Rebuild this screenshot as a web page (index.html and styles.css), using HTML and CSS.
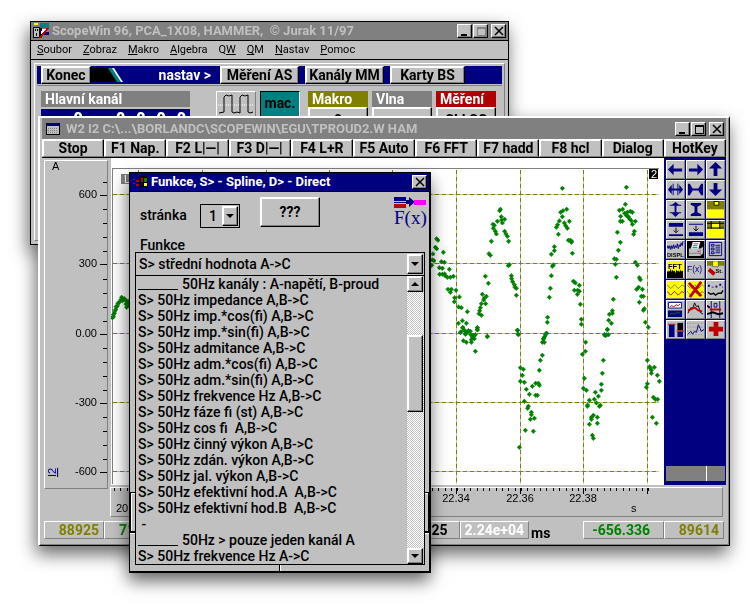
FILE: index.html
```html
<!DOCTYPE html>
<html lang="cs">
<head>
<meta charset="utf-8">
<title>ScopeWin 96</title>
<link rel="stylesheet" href="styles.css">
</head>
<body>
<main class="desktop">
<div class="windows">
<section class="window main-window">
  <header class="titlebar">
    <svg class="app-icon" width="16" height="16" viewBox="0 0 16 16" shape-rendering="crispEdges"><path fill="#008080" d="M7 0h9v5H7z"/><path fill="#ff0" d="M1 0h4v2H1z"/><path fill="#000080" d="M9 9h7v3H9z"/><path fill="#c0c0c0" stroke="#000" d="M.5 4.500h6v10h-6z"/><path d="M2 6h1v2H2zM4 6h1v2H4zM3 10h1v3H3zM7 5h2v2h2v3H9v3H7z"/><path fill="#fff" d="M9 6h4l-3 5H8z"/><path d="M7 15l8-10" stroke="#c00000" stroke-width="2"/></svg>
    <h1>ScopeWin 96, PCA_1X08, HAMMER, &nbsp;© Jurak 11/97</h1>
    <div class="controls">
      <button aria-label="Minimalizovat"><svg width="12" height="12" shape-rendering="crispEdges"><path d="M2 9h6v2H2z"/></svg></button>
      <button aria-label="Maximalizovat"><svg width="12" height="12" shape-rendering="crispEdges"><path d="M2.500 2.500h8v8h-8z" fill="none" stroke="#808080"/><path d="M2 2h9v2H2z" fill="#808080"/></svg></button>
      <button aria-label="Zavřít"><svg width="12" height="12"><path d="M2 2l8 8M10 2l-8 8" stroke="#000" stroke-width="1.500"/></svg></button>
    </div>
  </header>
  <nav class="menu"><a href="#"><u>S</u>oubor</a><a href="#"><u>Z</u>obraz</a><a href="#"><u>M</u>akro</a><a href="#"><u>A</u>lgebra</a><a href="#">Q<u>W</u></a><a href="#"><u>Q</u>M</a><a href="#"><u>N</u>astav</a><a href="#"><u>P</u>omoc</a></nav>
  <div class="main-body">
    <div class="quickbar">
      <button class="raised end">Konec</button>
      <svg class="stripe" width="64" height="18" viewBox="0 0 64 18"><path d="M0 2h17l13 14H0z"/><path fill="#008080" d="M17 2h5l9 14h-5z"/><path fill="#fff" d="M21 2h2l9 14h-2z"/></svg>
      <span class="set">nastav &gt;</span>
      <button class="raised">Měření AS</button>
      <button class="raised">Kanály MM</button>
      <button class="raised">Karty BS</button>
    </div>
    <div class="tools">
      <div class="channel"><h2>Hlavní kanál</h2><div class="digits"><b>0</b><b>0</b><b>0</b><b>0</b><b>0</b></div></div>
      <button class="wave" aria-label="Průběh"><svg width="38" height="26" viewBox="0 0 38 26" fill="none" stroke="#000"><path d="M1 12h36" stroke="#fff" stroke-dasharray="1 1"/><path d="M2 20l5-1V4l2-2 3 1 3-1v17l2 1 3-1 3 1V4l2-2 3 1 3-1v17l2 1 3-1"/><path d="M4 24h30" stroke="#c00000" stroke-width="2" stroke-dasharray="3 1"/></svg></button>
      <button class="mac">mac.</button>
      <div class="group macro"><h2>Makro</h2><button class="raised">0</button></div>
      <div class="group"><h2>Vlna</h2><button class="raised" aria-label="Vlna"></button></div>
      <div class="group measure"><h2>Měření</h2><button class="raised">CLLSC</button></div>
    </div>
  </div>
</section>

<section class="window scope-window">
  <header class="titlebar">
    <svg class="doc-icon" width="14" height="12" viewBox="0 0 14 12" shape-rendering="crispEdges"><path fill="#c0c0c0" stroke="#000" d="M.5.500h13v11H.5z"/><path fill="#000080" d="M1 0h12v3H1z"/><path d="M2 5h10M2 7h10M2 9h10" stroke="#808080" stroke-dasharray="1 1"/></svg>
    <h1>W2 I2 C:\...\BORLANDC\SCOPEWIN\EGU\TPROUD2.W HAM</h1>
    <div class="controls">
      <button aria-label="Minimalizovat"><svg width="12" height="12" shape-rendering="crispEdges"><path d="M2 9h6v2H2z"/></svg></button>
      <button aria-label="Maximalizovat"><svg width="12" height="12" shape-rendering="crispEdges"><path d="M2.500 2.500h8v8h-8z" fill="none" stroke="#000"/><path d="M2 2h9v2H2z"/></svg></button>
      <button aria-label="Zavřít"><svg width="12" height="12"><path d="M2 2l8 8M10 2l-8 8" stroke="#000" stroke-width="1.500"/></svg></button>
    </div>
  </header>
  <nav class="keys"><button>Stop</button><button>F1 Nap.</button><button>F2 L|—|</button><button>F3 D|—|</button><button>F4 L+R</button><button>F5 Auto</button><button>F6 FFT</button><button>F7 hadd</button><button>F8 hcl</button><button>Dialog</button><button>HotKey</button></nav>
  <div class="scope">
    <div class="y-axis">
      <svg width="62" height="327" viewBox="45 160 62 327" shape-rendering="crispEdges">
        <path stroke="#000" d="M103 181.500h4M100 194.500h7M103 208.500h4M103 222.500h4M103 236.500h4M103 250.500h4M100 263.500h7M103 278.500h4M103 292.500h4M103 306.500h4M103 320.500h4M100 333.500h7M103 347.500h4M103 361.500h4M103 375.500h4M103 389.500h4M100 402.500h7M103 416.500h4M103 430.500h4M103 444.500h4M103 458.500h4M100 471.500h7"/>
        <g text-anchor="end"><text x="97" y="197">600</text><text x="97" y="266">300</text><text x="97" y="336">0.00</text><text x="97" y="405">-300</text><text x="97" y="474">-600</text></g>
        <text x="52" y="169">A</text>
        <text class="channel-name" transform="translate(56 476) rotate(-90)">I2</text>
      </svg>
    </div>
    <div class="plot">
      <svg width="100%" height="327" viewBox="111 158 553 327" preserveAspectRatio="none">
        <defs><marker id="dot" markerUnits="userSpaceOnUse" markerWidth="15" markerHeight="15" refX="7.500" refY="7.500" viewBox="0 0 15 15"><path fill="#008000" d="M6 0h3v3h3v3h3v3h-3v3H9v3H6v-3H3V9H0V6h3V3h3z"/></marker></defs>
        <g shape-rendering="crispEdges" fill="none">
          <path stroke="#808080" d="M112.500 484V168.500H659"/>
          <path stroke="#c0c0c0" d="M113 194.500H659M113 263.500H659M113 333.500H659M113 402.500H659M113 471.500H659M138.500 170V484M202.500 170V484M266.500 170V484M329.500 170V484M392.500 170V484M456.500 170V484M520.500 170V484M583.500 170V484M647.500 170V484"/>
          <path stroke="#808000" stroke-dasharray="4 3" d="M113 194.500H659M113 263.500H659M113 333.500H659M113 402.500H659M113 471.500H659M138.500 170V484M202.500 170V484M266.500 170V484M329.500 170V484M392.500 170V484M456.500 170V484M520.500 170V484M583.500 170V484M647.500 170V484"/>
        </g>
        <g class="samples">
          <polyline transform="translate(30 250) scale(.33333)" points="247,203 250,200 250,194 253,190 255,182 258,178 258,170 262,168 264,160 268,157 272,150 275,142 280,148 283,146 277,152 288,152 292,155 290,172 294,168 288,162 298,152 298,160"/>
          <polyline transform="translate(400 160) scale(.33333)" points="110,236 114,241 106,262 110,266 99,282 97,300 130,277 95,316 102,302 124,305 133,307 118,323 127,325 148,328 119,343 127,343 134,342 142,352 151,352 136,348 160,349 144,388 154,388 151,397 168,391 164,413 178,411 163,425 176,441 184,443 202,455 187,482 175,490 199,490 188,503 183,515 195,512 205,514 232,503 232,510 212,524 222,527 262,529 237,461 244,466 239,452 241,443 244,431 257,431 253,414 251,420 259,409 247,403 265,370 256,349 271,286 267,281 274,244 289,222 286,214 280,205 279,193 292,184 304,170 299,152 301,148 307,189 314,178 305,180 283,196 314,214 318,222 322,229 326,244 325,317 328,314 334,347 335,356 338,365 343,374 345,382 349,385 349,406 353,511 354,522 431,536 434,530 439,520 442,487 443,472 448,412 451,385 454,347 457,319 460,315 454,283 463,272 463,260 475,223 469,202 473,194 478,183 487,170 482,157 489,152 500,148 487,85 508,184 493,189 497,197 502,205 505,241 511,241 514,247 515,244 517,280 520,364 526,369 538,376 523,391 533,391 532,403 538,394 541,433 544,478 544,493 614,524 620,524 622,509 634,490 626,481 628,463 637,460 637,452 640,418 649,352 646,313 643,296 649,298 655,271 661,247 652,217 667,184 661,184 662,169 658,151 668,148 676,133 679,82 674,160 682,157 691,154 697,157 680,167 685,170 688,176 694,182 706,184 697,193 703,214 701,223 706,307 712,316 718,353 721,359 716,382 727,388 710,388 724,409 730,409 718,427 733,446 730,451 736,487 745,502"/>
          <polyline transform="translate(420 240) scale(.33333)" points="129,263 133,272 121,278 145,272 151,274 139,280 136,283 172,263 172,269 160,286 166,284 157,292 163,296 154,299 130,302 139,307 154,307 202,290 166,334 292,271 295,284 301,383 310,388 307,406 301,424 313,427 319,448 328,463 313,484 325,499 323,505 334,517 334,524 331,538 343,535 316,571 340,574 298,622 337,439 347,430 355,430 358,436 347,466 352,466 358,391 361,361 367,346 367,307 373,307 370,296 376,284 380,280 497,307 496,334 487,343 493,415 490,445 499,451 508,481 503,495 502,499 523,478 529,489 526,457 535,469 541,496 538,499 544,451 544,433 547,400 550,361 514,532 520,526 514,538 532,532 508,553 532,550 517,586 520,595 553,284 556,287 565,284 562,268 682,361 689,380 691,385 703,382 694,391 694,400 712,406 718,424 682,431 679,442 700,472 706,478 713,478 697,532 709,550"/>
        </g>
        <path fill="#808080" d="M121 174h14v10h-14z"/><text x="124" y="183" fill="#fff">L</text>
        <path d="M649 169h9v10h-9z"/><text x="651" y="178" fill="#fff">2</text>
      </svg>
    </div>
    <aside class="palette">
      <div class="palette-grid">
        <button aria-label="Vlevo"><svg viewBox="0 0 18 18"><path d="M1 9l6-6v5h9v3H7v4z"/></svg></button>
        <button aria-label="Vpravo"><svg viewBox="0 0 18 18"><path d="M17 9l-6-6v5H2v3h9v4z"/></svg></button>
        <button aria-label="Nahoru"><svg viewBox="0 0 18 18"><path d="M9 1L2 8h5v8h4V8h5z"/></svg></button>
        <button aria-label="Roztáhnout vodorovně"><svg viewBox="0 0 18 18"><path d="M1 9l4-5v4h8V4l4 5-4 5v-4H5v4zM6 3h1v12H6zM11 3h1v12h-1z"/></svg></button>
        <button aria-label="Stlačit vodorovně"><svg viewBox="0 0 18 18"><path d="M1 3h2l3 5h6l3-5h2v12h-2l-3-5H6l-3 5H1z"/></svg></button>
        <button aria-label="Dolů"><svg viewBox="0 0 18 18"><path d="M9 16l7-7h-5V2H7v7H2z"/></svg></button>
        <button aria-label="Roztáhnout svisle"><svg viewBox="0 0 18 18"><path d="M9 1l5 4h-4v7h4l-5 5-5-5h4V5H4zM3 4h12v1H3zM3 12h12v1H3z"/></svg></button>
        <button aria-label="Stlačit svisle"><svg viewBox="0 0 18 18"><path d="M4 2h11v2l-4 2v6l4 2v2H4v-2l4-2V6L4 4z"/></svg></button>
        <button aria-label="Výběr nahoře"><svg viewBox="0 0 18 18"><path fill="#808000" d="M0 0h18v9H0z"/><path fill="#ff0" d="M0 9h18v9H0z"/><path fill="#ff0" stroke="#000080" d="M7.500.500h5v4h-5z"/></svg></button>
        <button aria-label="Posun dolů"><svg viewBox="0 0 18 18"><path d="M2 2h15v4H2zM2 14h15v2H2z"/><path stroke="#000" fill="none" d="M9.500 7v5M7 10l2.500 2.500L12 10"/></svg></button>
        <button aria-label="Posun na dno"><svg viewBox="0 0 18 18"><path d="M2 3h15v1H2zM2 12h15v4H2z"/><path stroke="#000" fill="none" d="M9.500 5v5M7 8l2.500 2.500L12 8"/></svg></button>
        <button aria-label="Rozdělený výběr"><svg viewBox="0 0 18 18"><path fill="#808000" d="M0 0h18v8H0z"/><path fill="#ff0" d="M0 8h18v10H0zM5 2h8v5H5z"/><path stroke="#000" fill="none" d="M0 2.500h18M0 7.500h18M4.500 0v8M13.500 0v8"/></svg></button>
        <button aria-label="Zobrazení"><svg viewBox="0 0 18 18"><path stroke="#000080" fill="none" d="M0 8l1-3 1 3 1-3 1 4 1-4 1 3 1-4 1 4 1-3 1 2 1-4 1 5 1-4 1 2 1-4 1 3 1-5"/><text x="0" y="17">DISPL</text></svg></button>
        <button aria-label="Tisk"><svg viewBox="0 0 18 18"><path fill="#000" d="M0 0h18v18H0z"/><path fill="#fff" d="M6 1h8l-2 8H4z"/><path fill="#c0c0c0" d="M2 8h12l3-2v7l-3 3H2z"/><path stroke="#008080" d="M7 3h5M6 5h5M6 7h5"/><path stroke="#808080" d="M2 13h12M14 9v6"/><path stroke="red" d="M11 11h2"/></svg></button>
        <button aria-label="Tabulka"><svg viewBox="0 0 18 18"><path stroke="#000080" fill="none" d="M2.500 1.500h13v14h-13zM4.500 3.500h3v2h-3zM4.500 7.500h3v2h-3zM4.500 11.500h3v2h-3zM9 4.500h5M9 6.500h5M9 8.500h5M9 10.500h5M9 12.500h5"/></svg></button>
        <button aria-label="FFT"><svg viewBox="0 0 18 18"><path fill="#ff0" d="M0 0h18v18H0z"/><path fill="#000" d="M0 10l1 2 1-2 1 1 1-3 1 4 1-3 1 2 1-1 1 3 1-4 1 2 1-1 1 2 1-3 1 2 1-1 1 1v7H0z"/><text class="fft" x="1" y="8">FFT</text></svg></button>
        <button aria-label="Funkce"><svg viewBox="0 0 18 18"><text class="fx" x="0" y="12">F(x)</text></svg></button>
        <button aria-label="Statistika"><svg viewBox="0 0 18 18"><path fill="#808000" d="M0 0h18v5H0z"/><path fill="#ff0" stroke="#000080" stroke-width=".5" d="M6 0h6v6H6z"/><path stroke="#c00000" stroke-width="4" d="M2 9l6 5"/><text x="9" y="13">St.</text></svg></button>
        <button aria-label="Křivky"><svg viewBox="0 0 18 18"><path fill="#ff0" d="M0 0h18v18H0z"/><path stroke="#c00000" fill="none" d="M0 11l4 4 4-4 4 4 4-4 2 2"/><path stroke="#808000" fill="none" d="M0 4l4 4 4-4 4 4 4-4 2 2"/></svg></button>
        <button aria-label="Smazat křivky"><svg viewBox="0 0 18 18"><path fill="#ff0" d="M0 0h18v18H0z"/><path stroke="#000080" fill="none" stroke-dasharray="1 1" d="M0 4l4 4 4-4 4 4 4-4 2 2M0 11l4 4 4-4 4 4 4-4 2 2"/><path stroke="#c00000" stroke-width="3" d="M2 2l13 14M15 1L3 17"/></svg></button>
        <button aria-label="Body"><svg viewBox="0 0 18 18"><path d="M1 4h2v2H1zM5 6h2v1H5zM9 5h2v2H9zM13 3h2v2h-2zM16 6h1v1h-1z"/><path stroke="#000" stroke-width="1.500" fill="none" d="M1 12l3 2 3-1 2 2 3-2h3l2-3"/></svg></button>
        <button aria-label="Dva grafy"><svg viewBox="0 0 18 18"><path fill="#fff" stroke="#000080" d="M1.500 1.500h14v6h-14z"/><path d="M1 10h15v7H1z"/><path stroke="#c00000" fill="none" d="M3 6l2-1 2 1 3-2 2 1 2-2"/><path stroke="#008000" fill="none" d="M3 14l3-1 2 1 3-2 3 1"/></svg></button>
        <button aria-label="Obálka"><svg viewBox="0 0 18 18"><path stroke="#000" fill="none" d="M1 13l3-6 2 1 2-6 2 4 2-1 2 7 3 2"/><path stroke="#c00000" stroke-width="2" fill="none" d="M1 10l3-1 4-2 4 3 4 1"/></svg></button>
        <button aria-label="Kurzory"><svg viewBox="0 0 18 18"><path stroke="#000080" fill="none" d="M4.500 0v18M13.500 0v18M7.500 2.500h3v4h-3z"/><path stroke="#000" stroke-width="2" fill="none" d="M0 5l3 2M0 14l6-2 6 2 5-1"/><path fill="#c00000" d="M3 8h12v2H3z"/></svg></button>
        <button aria-label="Sloupce"><svg viewBox="0 0 18 18"><path d="M2 4h6v13H2zM11 11h6v6h-6z"/><path fill="#000" d="M11 2h6v8h-6z"/><path fill="#c00000" d="M1 3h8v1H1zM10 10h8v1h-8z"/></svg></button>
        <button aria-label="Signál"><svg viewBox="0 0 18 18"><path stroke="#808080" stroke-dasharray="1 2" d="M0 2.500h18M0 6.500h18M0 10.500h18M0 14.500h18"/><path stroke="#000080" fill="none" d="M1 14l3-3 2 3 2-3 2 1 2-8 2 4 1 3 3-2"/></svg></button>
        <button aria-label="Přidat"><svg viewBox="0 0 18 18"><path fill="#c00000" d="M7 1h5v5h5v5h-5v5H7v-5H2V6h5z"/></svg></button>
      </div>
      <div class="palette-foot"></div>
    </aside>
  </div>
  <div class="x-axis">
    <svg width="100%" height="28" viewBox="111 488 611 28" preserveAspectRatio="none" shape-rendering="crispEdges">
      <path class="minor" d="M114 489.500H655"/>
      <path stroke="#000" d="M138.500 488v6M202.500 488v6M266.500 488v6M329.500 488v6M392.500 488v6M456.500 488v6M520.500 488v6M583.500 488v6M647.500 488v6"/>
      <g text-anchor="middle"><text x="456" y="502">22.34</text><text x="520" y="502">22.36</text><text x="583" y="502">22.38</text></g>
      <text x="116" y="512">20</text><text x="631" y="512">s</text>
    </svg>
  </div>
  <footer class="status">
    <output class="olive-text first">88925</output><output class="green-text second">71</output><output class="third">25</output><output class="white-text">2.24e+04</output><span class="unit">ms</span><output class="green-text fifth">-656.336</output><output class="olive-text last">89614</output>
  </footer>
</section>
</div>

<section class="dialog" role="dialog" aria-label="Funkce">
  <header class="titlebar">
    <svg class="app-icon" width="17" height="16" viewBox="0 0 17 16" shape-rendering="crispEdges"><path d="M7 3q4-3 9 0v11q-5-3-9 0z"/><path fill="#c00000" d="M1 5h2v1H1zM4 6h3v2H4zM1 9h2v1H1zM4 10h3v2H4zM9 4h2v4H9z"/><path fill="#008000" d="M12 4h3v4h-3z"/><path fill="#000080" d="M9 9h2v3H9z"/><path fill="#ff0" d="M12 9h3v3h-3z"/></svg>
    <h1>Funkce, S&gt; - Spline, D&gt; - Direct</h1>
    <div class="controls"><button aria-label="Zavřít"><svg width="12" height="12"><path d="M2 2l8 8M10 2l-8 8" stroke="#000" stroke-width="1.500"/></svg></button></div>
  </header>
  <div class="frame"></div>
  <div class="dialog-body">
    <div class="top-row">
      <label for="page">stránka</label>
      <div class="drop small"><select id="page"><option>1</option></select><i class="arrow down"></i></div>
      <button class="help">???</button>
      <svg class="fx-logo" width="34" height="32" viewBox="0 0 34 32"><path fill="#000080" d="M0 0h12v4H0zM0 5h14v1H0zM12 3h3V0l6 5-6 5V7h-3z"/><path fill="#c00000" d="M0 7h12v4H0z"/><path fill="#f0f" d="M20 3h12v5H20z"/><text x="0" y="27">F(x)</text></svg>
    </div>
    <label class="fn-label" for="fn">Funkce</label>
    <div class="combo">
      <div class="drop wide"><select id="fn"><option>S&gt; střední hodnota A-&gt;C</option></select><i class="arrow down"></i></div>
      <div class="list-row">
        <ul role="listbox" aria-label="Funkce">
          <li><span class="rule"></span>50Hz kanály : A-napětí, B-proud</li>
          <li>S&gt; 50Hz impedance A,B-&gt;C</li>
          <li>S&gt; 50Hz imp.*cos(fi) A,B-&gt;C</li>
          <li>S&gt; 50Hz imp.*sin(fi) A,B-&gt;C</li>
          <li>S&gt; 50Hz admitance A,B-&gt;C</li>
          <li>S&gt; 50Hz adm.*cos(fi) A,B-&gt;C</li>
          <li>S&gt; 50Hz adm.*sin(fi) A,B-&gt;C</li>
          <li>S&gt; 50Hz frekvence Hz A,B-&gt;C</li>
          <li>S&gt; 50Hz fáze fi (st) A,B-&gt;C</li>
          <li>S&gt; 50Hz cos fi &nbsp;A,B-&gt;C</li>
          <li>S&gt; 50Hz činný výkon A,B-&gt;C</li>
          <li>S&gt; 50Hz zdán. výkon A,B-&gt;C</li>
          <li>S&gt; 50Hz jal. výkon A,B-&gt;C</li>
          <li>S&gt; 50Hz efektivní hod.A &nbsp;A,B-&gt;C</li>
          <li>S&gt; 50Hz efektivní hod.B &nbsp;A,B-&gt;C</li>
          <li>&nbsp;-</li>
          <li><span class="rule"></span>50Hz &gt; pouze jeden kanál A</li>
          <li>S&gt; 50Hz frekvence Hz A-&gt;C</li>
        </ul>
        <div class="scrollbar"><i class="arrow up"></i><div class="track"><div class="thumb"></div></div><i class="arrow down"></i></div>
      </div>
    </div>
    <div class="foot"><span></span><span></span></div>
  </div>
</section>
</main>
</body>
</html>
```
FILE: styles.css
```css
* { box-sizing: border-box; }
body { margin: 0; background: #fff; color: #000; font: 500 14px/16px Roboto, "Liberation Sans", sans-serif; }
button, select { font: inherit; color: inherit; border-radius: 0; padding: 0; margin: 0; }
h1, h2 { margin: 0; font: inherit; white-space: nowrap; }
svg { display: block; }

.desktop { position: relative; min-height: 100vh; overflow: hidden; }
.windows { filter: drop-shadow(-2px 8px 9px rgba(0, 0, 0, .6)); }
.window { background: #c0c0c0; position: absolute; }
.main-window { left: 30px; right: 241px; top: 21px; border: 1px solid #000; }
.scope-window { left: 38px; right: 20px; top: 116px; border: 2px solid #fff; border-right: 1px solid #000; border-bottom: 1px solid #000; padding: 0 3px 6px 2px; box-shadow: inset -1px -1px #808080; }

.titlebar { display: flex; align-items: center; height: 18px; background: #808080; color: #c0c0c0; font-size: 13px; font-weight: 700; }
.main-window .titlebar { padding: 0 2px; gap: 3px; border-bottom: 1px solid #000; height: 19px; }
.scope-window .titlebar { height: 21px; padding: 0 2px 0 4px; gap: 6px; }
.controls { display: flex; margin-left: auto; gap: 1px; }
.controls button { width: 15px; height: 14px; display: grid; place-items: center; background: #c0c0c0; border: 1px solid; border-color: #fff #000 #000 #fff; box-shadow: inset -1px -1px #808080; }
.controls button:last-child { margin-left: 2px; }

.menu { display: flex; gap: 11px; height: 19px; padding: 0 6px; align-items: center; border-bottom: 1px solid #000; font: 11px/16px Roboto, sans-serif; }
.menu a { color: #000; text-decoration: none; }

.main-body { margin: 3px; min-height: 178px; padding: 2px 2px; border: 1px solid; border-color: #fff #808080 #808080 #fff; }
.quickbar { display: flex; align-items: center; height: 18px; padding: 0 37px 0 4px; background: #000080; color: #fff; font-weight: 700; }
.raised { background: #c0c0c0; color: #000; border: 1px solid; border-color: #fff #000 #000 #fff; box-shadow: inset -1px -1px #808080, inset 1px 1px #fff; }
.quickbar .raised { height: 18px; line-height: 14px; width: 79px; margin-left: 6px; white-space: nowrap; }
.quickbar .end { width: 50px; margin-left: 0; }
.quickbar .raised:last-child { width: 75px; }
.set { margin-left: auto; padding-right: 3px; }
.tools { display: flex; border-top: 1px solid #808080; margin-top: 1px; padding: 5px 4px 0; align-items: flex-start; gap: 4px; font-weight: 700; }
.tools h2 { color: #fff; padding-left: 4px; height: 16px; }
.channel { width: 149px; margin-right: 22px; }
.channel h2, .group h2 { background: #808080; }
.digits { margin-top: 2px; height: 20px; background: #000080; color: #fff; display: flex; justify-content: flex-end; gap: 11px; padding-right: 4px; font-size: 16px; line-height: 20px; }
.digits b:first-child { margin-right: 22px; }
.wave { width: 40px; height: 30px; background: #c0c0c0; border: 1px solid; border-color: #fff #808080 #808080 #fff; }
.mac { width: 40px; height: 30px; background: #008080; border: 1px solid; border-color: #000 #fff #fff #000; padding-bottom: 6px; }
.mac + .group { margin-left: 4px; }
.group { width: 60px; }
.group .raised { width: 100%; height: 26px; display: block; }
.macro h2 { background: #808000; }
.measure h2 { background: #b00000; }

.keys { display: grid; grid-template-columns: repeat(11, 1fr); border-bottom: 1px solid #000; font-weight: 700; }
.keys button { height: 18px; line-height: 14px; background: #c0c0c0; border: 1px solid; border-color: #fff #000 #808080 #fff; box-shadow: inset -1px 0 #808080, inset 1px 1px #fff; white-space: nowrap; }

.scope { display: flex; align-items: flex-start; }
svg text { font: 400 11px "Liberation Sans", sans-serif; }
.y-axis { width: 64px; flex: none; margin: 2px 3px -4px 2px; border: 1px solid; border-color: #fff #808080 #808080 #fff; }
.y-axis .channel-name { fill: #000080; text-decoration: underline; }
.plot { flex: 1; min-width: 0; background: #fff; }
.samples polyline { fill: none; stroke: none; marker: url(#dot); }
.palette { width: 62px; flex: none; align-self: stretch; background: #000080; padding: 2px 1px 4px 2px; display: flex; flex-direction: column; justify-content: space-between; }
.palette-grid { display: grid; grid-template-columns: repeat(3, 19px); gap: 1px; }
.palette button { width: 19px; height: 19px; background: #c0c0c0; border: 1px solid; border-color: #fff #808080 #808080 #fff; display: grid; place-items: center; overflow: hidden; }
.palette button svg { width: 17px; height: 17px; fill: #000080; }
.palette text { font-size: 6px; font-weight: 700; fill: #000; }
.palette .fft { font-size: 8px; fill: #000; }
.palette .fx { font-size: 9px; font-weight: 400; fill: #000080; }
.palette-foot { height: 15px; background: linear-gradient(90deg, #808080 40px, #fff 40px 41px, #808080 41px); }
.x-axis { margin: 2px 3px 4px 68px; border: 1px solid; border-color: #fff #808080 #808080 #fff; }
.minor { stroke: #000; stroke-width: 3; stroke-dasharray: 1 5.360; }

.status { display: flex; padding: 0 2px; height: 18px; font-weight: 700; }
.status output { border: 1px solid; border-color: #fff #808080 #808080 #fff; padding: 0 4px; text-align: right; }
.status .first { width: 60px; }
.status .second { width: 80px; text-align: left; padding-left: 14px; }
.status .third { flex: 1; padding-right: 11px; }
.unit { width: 54px; padding: 4px 2px 0; }
.status .fifth { width: 81px; padding-right: 13px; }
.status .last { width: 60px; }
.olive-text { color: #808000; }
.green-text { color: #008000; }
.white-text { color: #fff; }

.dialog { position: absolute; left: 129px; top: 172px; width: 302px; border: 1px solid #000; border-right-width: 2px; border-bottom-width: 2px; background: #c0c0c0; box-shadow: -1px 8px 16px rgba(0, 0, 0, .6); }
.dialog .titlebar { background: #000080; color: #fff; height: 19px; border-bottom: 1px solid #000; padding: 0 2px; gap: 2px; }
.frame { position: absolute; left: 0; right: 0; top: 319px; height: 41px; border: 1px solid #000; border-width: 1px 1px 2px; box-shadow: inset 1px 1px #fff, 0 1px #fff; }
.dialog-body { position: relative; padding: 5px 5px 0; }
.top-row { display: flex; align-items: flex-start; height: 41px; padding-left: 5px; }
.top-row label { width: 60px; padding-top: 10px; }
.drop { position: relative; display: flex; border: 1px solid #000; padding: 1px; }
.drop select { appearance: none; flex: 1; min-width: 0; border: 0; background: none; padding-left: 2px; }
.drop .arrow { flex: none; }
.small { width: 40px; height: 24px; margin-top: 7px; }
.small select { padding-left: 7px; }
.small .arrow { height: 20px; }
.wide { height: 24px; }
.wide .arrow { height: 20px; }
.help { width: 60px; height: 30px; margin-left: 20px; background: #c0c0c0; border: 1px solid; border-color: #fff #000 #000 #fff; box-shadow: inset -1px -1px #808080, inset 1px 1px #fff; font-weight: 700; }
.fx-logo { margin: 0 -4px 0 auto; }
.fx-logo text { font: 19px "Liberation Serif", serif; fill: #000080; }
.fn-label { display: block; padding-left: 5px; height: 14px; line-height: 14px; }
.combo { margin-right: -1px; }
.list-row { display: flex; border: 1px solid #000; border-top: 0; background: #c0c0c0; }
ul { list-style: none; margin: 0; padding: 0 2px; flex: 1; white-space: nowrap; }
li { height: 16px; line-height: 16px; }
.rule { display: inline-block; width: 40px; height: 14px; margin-right: 4px; border-bottom: 1px solid #000; vertical-align: top; }
.arrow { width: 16px; height: 16px; display: grid; place-items: center; background: #c0c0c0; border: 1px solid; border-color: #fff #000 #000 #fff; box-shadow: inset -1px -1px #808080, inset 1px 1px #fff; }
.arrow::after { content: ""; border: 4px solid transparent; border-width: 4px 4px 0; border-top-color: #000; }
.arrow.up::after { border-width: 0 4px 4px; border-bottom-color: #000; }
.scrollbar { width: 17px; display: flex; flex-direction: column; }
.track { flex: 1; padding-top: 43px; background: repeating-conic-gradient(#c0c0c0 0 25%, #fff 0 50%) 0 0 / 2px 2px; }
.thumb { width: 16px; height: 77px; background: #c0c0c0; border: 1px solid; border-color: #fff #000 #000 #fff; box-shadow: inset -1px -1px #808080, inset 1px 1px #fff; }
.foot { display: flex; height: 6px; margin: 0 -5px; }
.foot span:first-child { width: 150px; border-right: 1px solid #000; }
.foot span:last-child { flex: 1; border-left: 1px solid #fff; }
```
